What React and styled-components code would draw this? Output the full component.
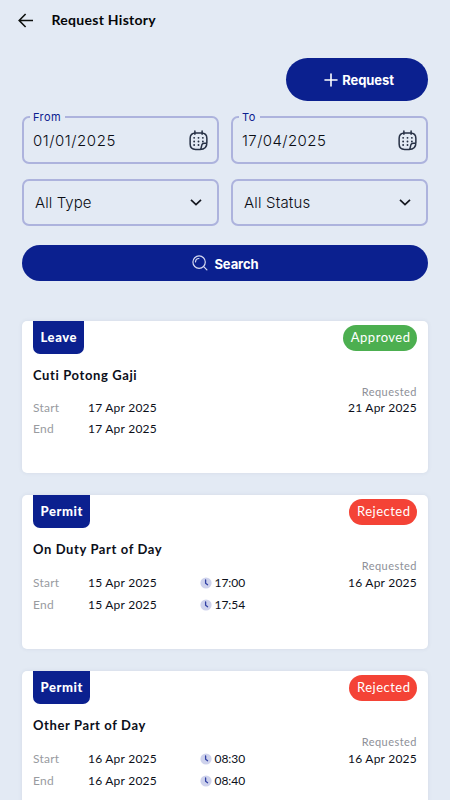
import React from "react";
import styled, { createGlobalStyle } from "styled-components";

const navy = "#0b208f";
const mist = "#e3eaf4";

const GlobalStyle = createGlobalStyle`
  * { box-sizing: border-box; }
  html, body { margin: 0; background: ${mist}; }
  body { height: 800px; overflow: hidden; font-family: Lato, "Open Sans", sans-serif; color: #0c0f1a; }
  button { font: inherit; border: 0; padding: 0; margin: 0; }
`;

const Screen = styled.main`
  height: 800px;
  overflow: hidden;
  background: ${mist};
`;

const TopBar = styled.header`
  display: flex;
  align-items: center;
  gap: 16.5px;
  height: 40px;
  padding-left: 17px;
  svg { display: block; }
`;

const PageTitle = styled.h1`
  margin: 0;
  font-size: 14px;
  font-weight: 700;
  line-height: 20px;
  letter-spacing: 0.28px;
  color: #050608;
`;

const Filters = styled.section`
  display: flex;
  flex-direction: column;
  padding: 18px 22px 0;
`;

const PrimaryButton = styled.button`
  display: flex;
  align-items: center;
  justify-content: center;
  gap: ${(p) => (p.$wide ? 6 : 4)}px;
  align-self: ${(p) => (p.$wide ? "stretch" : "flex-end")};
  width: ${(p) => (p.$wide ? "auto" : "142px")};
  height: ${(p) => (p.$wide ? 36 : 43)}px;
  padding-left: ${(p) => (p.$wide ? 0 : 4)}px;
  border-radius: 22px;
  background: ${navy};
  color: #fff;
  font-family: Inter, sans-serif;
  font-size: 13px;
  font-weight: 700;
  letter-spacing: -0.08px;
  span { padding-top: ${(p) => (p.$wide ? 2 : 1)}px; }
`;

const FieldGrid = styled.div`
  display: grid;
  grid-template-columns: 197px 197px;
  justify-content: space-between;
  row-gap: 15px;
  margin: 15px 0 19px;
`;

const Field = styled.div`
  position: relative;
  display: flex;
  align-items: center;
  justify-content: space-between;
  height: 47.5px;
  padding: ${(p) => (p.$select ? "0 14px 0 11px" : "1px 9.5px 0 9px")};
  border: 2px solid #adb3dd;
  border-radius: 7px;
  font-family: Inter, sans-serif;
  font-size: 15px;
  font-weight: 300;
  color: #0b0d14;
  svg { display: block; }
`;

const FieldLabel = styled.label`
  position: absolute;
  left: 6px;
  top: -7.5px;
  padding: 0 4px 0 3px;
  background: ${mist};
  color: ${navy};
  font-size: 11px;
  font-weight: 400;
  line-height: 13px;
  letter-spacing: 0.42px;
`;

const FieldValue = styled.span`
  letter-spacing: ${(p) => p.$spacing}px;
`;

const History = styled.section`
  display: flex;
  flex-direction: column;
  gap: 22px;
  padding: 40px 22px 0;
`;

const Card = styled.article`
  flex: none;
  height: ${(p) => (p.$timed ? 154 : 152)}px;
  padding: 0 11px;
  border-radius: 5px;
  background: #fff;
  box-shadow: 0 0 4px rgba(60, 70, 100, 0.09);
`;

const CardTop = styled.div`
  display: flex;
  justify-content: space-between;
  align-items: flex-start;
  height: 33px;
`;

const KindTab = styled.span`
  height: 33px;
  padding: 0 7px 0 7.5px;
  border-radius: 0 0 7px 7px;
  background: ${navy};
  color: #fff;
  font-size: 13px;
  font-weight: 900;
  line-height: 32px;
  letter-spacing: 0.6px;
`;

const StatusPill = styled.span`
  height: 26px;
  margin-top: 3.5px;
  padding: 0 6.5px 0 7.5px;
  border-radius: 13px;
  background: ${(p) => (p.$approved ? "#4caf50" : "#f44336")};
  color: #fff;
  font-size: 13px;
  line-height: 25px;
  letter-spacing: 0.5px;
`;

const CardTitle = styled.h2`
  margin: 11px 0 0;
  font-size: 13px;
  font-weight: 700;
  line-height: 20px;
  letter-spacing: 0.61px;
`;

const CardBody = styled.div`
  display: flex;
  justify-content: space-between;
  font-size: 12px;
`;

const Period = styled.div`
  display: grid;
  grid-template-columns: 55px 112px auto;
  grid-auto-rows: ${(p) => (p.$timed ? 22 : 21)}px;
  align-items: center;
  padding-top: 12px;
  letter-spacing: 0.23px;
`;

const Muted = styled.span`
  color: #999b9f;
`;

const Time = styled.span`
  display: flex;
  align-items: center;
  gap: 2.5px;
  letter-spacing: -0.05px;
  svg { display: block; position: relative; top: 1px; }
`;

const Requested = styled.div`
  display: flex;
  flex-direction: column;
  align-items: flex-end;
  line-height: ${(p) => (p.$timed ? 19 : 18)}px;
  letter-spacing: 0.23px;
`;

const RequestedLabel = styled.span`
  color: #8d9098;
  font-size: 11px;
  line-height: 14px;
  letter-spacing: 0.47px;
`;

const BackIcon = () => (
  <svg width="18" height="18" viewBox="0 0 18 18" fill="none" stroke="#0d100d" strokeWidth="1.6">
    <path d="M16 9.5H2.6M8.6 3 2.2 9.5l6.4 6.5" />
  </svg>
);

const PlusIcon = () => (
  <svg width="14" height="14" viewBox="0 0 14 14" stroke="#fff" strokeWidth="1.6" strokeLinecap="round">
    <path d="M7 1v12M1 7h12" />
  </svg>
);

const SearchIcon = () => (
  <svg width="17" height="17" viewBox="0 0 17 17" fill="none" stroke="#d5d9f1" strokeWidth="1.2" strokeLinecap="round">
    <circle cx="8.1" cy="7.1" r="6.2" />
    <path d="M12.7 11.7 15.9 14.9M4.5 6.9A3.6 3.6 0 0 1 7.9 3.5" />
  </svg>
);

const CalendarIcon = () => (
  <svg width="19" height="21" viewBox="0 0 20 22" fill="none" stroke="#273145" strokeWidth="1.6" strokeLinecap="round">
    <path d="M11.6 20.4H7Q1.2 20.4 1.2 14.8V8.7Q1.2 3 7 3h6q5.8 0 5.8 5.7v4.9q0 6.8-7.2 6.8c2.1-.5.7-5.2 3.1-6.2 1.2-.5 2.9-.1 4.1-.6" />
    <path d="M6.2 1v3.4M13.8 1v3.4" />
    <path d="M5.4 8.2h.01M10 8.2h.01M14.6 8.2h.01M5.4 12h.01M10 12h.01M14.6 12h.01M5.4 15.8h.01M10 15.8h.01" strokeWidth="2" />
  </svg>
);

const ChevronIcon = () => (
  <svg width="14" height="10" viewBox="0 0 14 10" fill="none" stroke="#14171f" strokeWidth="1.7">
    <path d="m2 2.8 5 4.8 5-4.8" />
  </svg>
);

const ClockIcon = () => (
  <svg width="12" height="12" viewBox="0 0 12 12" fill="none">
    <circle cx="6" cy="6" r="5.6" fill="#ced2ec" />
    <path d="M5.6 3v3.2l2 1.5" stroke="#3140a4" strokeWidth="1.3" strokeLinecap="round" strokeLinejoin="round" />
  </svg>
);

const requests = [
  { kind: "Leave", title: "Cuti Potong Gaji", status: "Approved", requested: "21 Apr 2025", start: ["17 Apr 2025"], end: ["17 Apr 2025"] },
  { kind: "Permit", title: "On Duty Part of Day", status: "Rejected", requested: "16 Apr 2025", start: ["15 Apr 2025", "17:00"], end: ["15 Apr 2025", "17:54"] },
  { kind: "Permit", title: "Other Part of Day", status: "Rejected", requested: "16 Apr 2025", start: ["16 Apr 2025", "08:30"], end: ["16 Apr 2025", "08:40"] },
];

function Moment({ label, value: [date, time] }) {
  return (
    <>
      <Muted>{label}</Muted>
      <span>{date}</span>
      {time ? <Time><ClockIcon />{time}</Time> : <span />}
    </>
  );
}

function RequestCard({ item }) {
  const timed = item.start.length > 1;
  return (
    <Card $timed={timed}>
      <CardTop>
        <KindTab>{item.kind}</KindTab>
        <StatusPill $approved={item.status === "Approved"}>{item.status}</StatusPill>
      </CardTop>
      <CardTitle>{item.title}</CardTitle>
      <CardBody>
        <Period $timed={timed}>
          <Moment label="Start" value={item.start} />
          <Moment label="End" value={item.end} />
        </Period>
        <Requested $timed={timed}>
          <RequestedLabel>Requested</RequestedLabel>
          <span>{item.requested}</span>
        </Requested>
      </CardBody>
    </Card>
  );
}

export default function App() {
  return (
    <Screen>
      <GlobalStyle />
      <TopBar>
        <BackIcon />
        <PageTitle>Request History</PageTitle>
      </TopBar>
      <Filters>
        <PrimaryButton><PlusIcon /><span>Request</span></PrimaryButton>
        <FieldGrid>
          <Field>
            <FieldLabel>From</FieldLabel>
            <FieldValue $spacing={0.55}>01/01/2025</FieldValue>
            <CalendarIcon />
          </Field>
          <Field>
            <FieldLabel>To</FieldLabel>
            <FieldValue $spacing={0.42}>17/04/2025</FieldValue>
            <CalendarIcon />
          </Field>
          <Field $select>
            <FieldValue $spacing={0.08}>All Type</FieldValue>
            <ChevronIcon />
          </Field>
          <Field $select>
            <FieldValue $spacing={0.18}>All Status</FieldValue>
            <ChevronIcon />
          </Field>
        </FieldGrid>
        <PrimaryButton $wide><SearchIcon /><span>Search</span></PrimaryButton>
      </Filters>
      <History>
        {requests.map((item) => <RequestCard key={item.title} item={item} />)}
      </History>
    </Screen>
  );
}
